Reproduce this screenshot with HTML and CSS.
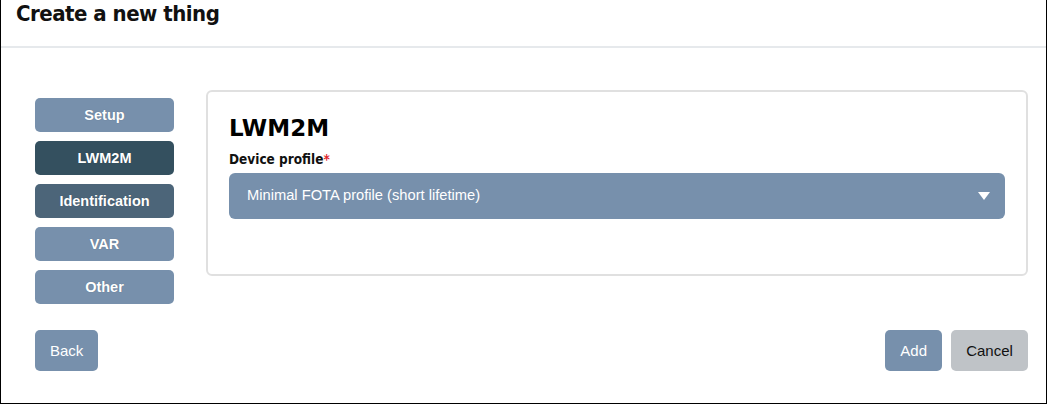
FILE: index.html
```html
<!DOCTYPE html>
<html>
<head>
<meta charset="utf-8">
<link rel="stylesheet" href="styles.css">
</head>
<body>
<div class="frame">
  <header class="header">
    <h1 class="title">Create a new thing</h1>
  </header>
  <main class="main">
    <div class="content">
      <nav class="steps">
        <button class="step step-light">Setup</button>
        <button class="step step-dark">LWM2M</button>
        <button class="step step-mid">Identification</button>
        <button class="step step-light">VAR</button>
        <button class="step step-light">Other</button>
      </nav>
      <section class="card">
        <h2 class="card-title">LWM2M</h2>
        <label class="field-label">Device profile<span class="req">*</span></label>
        <div class="select">
          <span class="select-text">Minimal FOTA profile (short lifetime)</span>
          <svg class="caret" width="12" height="8" viewBox="0 0 12 8"><path d="M0 0H12L6 8Z" fill="#fff"/></svg>
        </div>
      </section>
    </div>
    <div class="footer">
      <button class="btn btn-primary">Back</button>
      <div class="footer-right">
        <button class="btn btn-primary">Add</button>
        <button class="btn btn-cancel">Cancel</button>
      </div>
    </div>
  </main>
</div>
</body>
</html>
```
FILE: styles.css
```css
* { box-sizing: border-box; }
html, body { margin: 0; padding: 0; background: #fff; }
.frame {
  width: 1047px;
  height: 404px;
  border-left: 1px solid #000;
  border-right: 1px solid #000;
  border-bottom: 1px solid #000;
  display: flex;
  flex-direction: column;
}
.header {
  height: 48px;
  border-bottom: 2px solid #e6e9ec;
  padding-left: 15px;
}
.title {
  margin: 0;
  font-family: "DejaVu Sans Condensed", "DejaVu Sans", sans-serif;
  font-weight: bold;
  font-size: 22px;
  line-height: 28px;
  color: #111;
  letter-spacing: -0.5px;
}
.main {
  padding: 42px 18px 0 34px;
  display: flex;
  flex-direction: column;
}
.content {
  display: flex;
  gap: 32px;
  align-items: flex-start;
}
.steps {
  display: flex;
  flex-direction: column;
  gap: 9px;
  padding-top: 8px;
  width: 139px;
}
.step {
  height: 34px;
  border: none;
  border-radius: 5px;
  color: #fff;
  font-family: "Liberation Sans", Arial, sans-serif;
  font-weight: bold;
  font-size: 14.5px;
  padding: 0;
  text-shadow: 0 0 1px rgba(0,0,0,0.25);
}
.step-light { background: #7790ac; }
.step-dark { background: #34505f; }
.step-mid { background: #4c6579; }
.card {
  flex: 1;
  height: 186px;
  border: 2px solid #e0e0e0;
  border-radius: 6px;
  padding: 21px 21px 0 21px;
}
.card-title {
  margin: 0;
  font-family: "DejaVu Sans", sans-serif;
  font-weight: bold;
  font-size: 23px;
  line-height: 30px;
  color: #000;
}
.field-label {
  display: block;
  margin-top: 7px;
  font-family: "DejaVu Sans Condensed", "DejaVu Sans", sans-serif;
  font-weight: bold;
  font-size: 13.5px;
  line-height: 18px;
  color: #111;
}
.req { color: #e0262b; }
.select {
  margin-top: 5px;
  height: 46px;
  background: #7790ac;
  border-radius: 6px;
  display: flex;
  align-items: center;
  justify-content: space-between;
  padding: 0 15px 0 18px;
}
.select-text {
  font-family: "Liberation Sans", Arial, sans-serif;
  font-size: 14.7px;
  color: #fff;
  margin-top: -2px;
}
.caret { display: block; margin-top: 0; }
.footer {
  margin-top: 26px;
  display: flex;
  justify-content: space-between;
}
.footer-right { display: flex; gap: 9px; }
.btn {
  height: 41px;
  border: none;
  border-radius: 5px;
  font-family: "Liberation Sans", Arial, sans-serif;
  font-size: 15px;
  padding: 0 15px;
}
.btn-primary { background: #7790ac; color: #fff; }
.btn-cancel { background: #bfc3c7; color: #111; width: 77px; }
```
